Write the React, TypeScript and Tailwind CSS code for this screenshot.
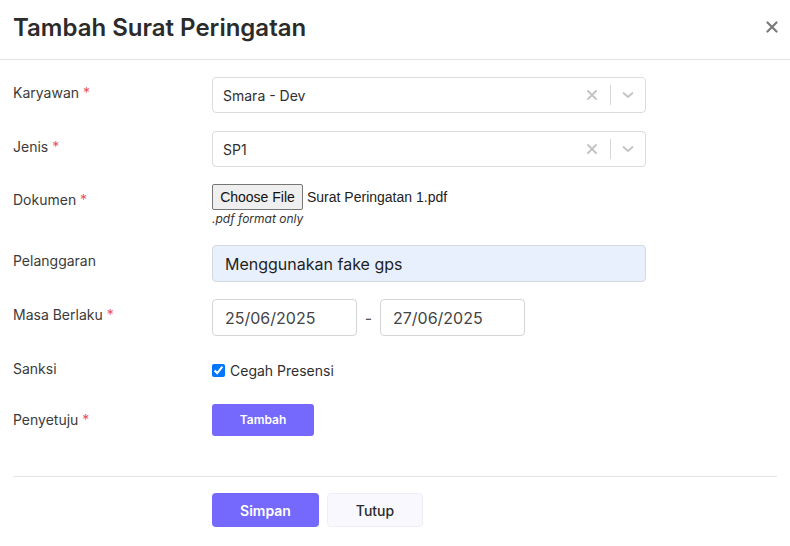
import React from 'react';

const font = { fontFamily: 'Inter, "Noto Sans", sans-serif' };

function Label({ text, required }: { text: string; required?: boolean }) {
  return (
    <div className="w-[199px] shrink-0 pt-[6px] text-[14px] leading-5 text-[#3b3b3b]">
      {text}
      {required && <span className="text-[#ea5455]"> *</span>}
    </div>
  );
}

function SelectBox({ value }: { value: string }) {
  return (
    <div className="flex h-[36px] w-[434px] items-center rounded-[4px] border border-[#dcdcdc] bg-white">
      <div className="flex-1 pl-[10px] text-[14px] text-[#2f2f2f]">{value}</div>
      <svg width="12" height="12" viewBox="0 0 12 12" className="mr-[12px]">
        <path d="M2 2 L10 10 M10 2 L2 10" stroke="#c4c4c4" strokeWidth="2" strokeLinecap="round" />
      </svg>
      <div className="h-[20px] w-px bg-[#d6d6d6]" />
      <svg width="14" height="14" viewBox="0 0 14 14" className="mx-[10px]">
        <path d="M2.5 5 L7 9 L11.5 5" fill="none" stroke="#c4c4c4" strokeWidth="1.8" strokeLinecap="round" strokeLinejoin="round" />
      </svg>
    </div>
  );
}

export default function App() {
  return (
    <div className="h-[546px] w-[790px] bg-white" style={font}>
      {/* header */}
      <div className="flex h-[60px] items-center justify-between border-b border-[#e2e2e2] pl-[13px] pr-[12px]">
        <h2 className="mt-[-4px] text-[24px] font-semibold text-[#2b2b2b]">Tambah Surat Peringatan</h2>
        <svg width="12" height="12" viewBox="0 0 12 12" className="mt-[-6px]">
          <path d="M1.5 1.5 L10.5 10.5 M10.5 1.5 L1.5 10.5" stroke="#7a7a7a" strokeWidth="2.2" strokeLinecap="round" />
        </svg>
      </div>

      <div className="px-[13px]">
        <div className="flex flex-col pt-[17px]">
          <div className="flex h-[36px] items-start">
            <Label text="Karyawan" required />
            <SelectBox value="Smara - Dev" />
          </div>

          <div className="mt-[18px] flex h-[36px] items-start">
            <Label text="Jenis" required />
            <SelectBox value="SP1" />
          </div>

          <div className="mt-[17px] flex h-[44px] items-start">
            <Label text="Dokumen" required />
            <div>
              <div className="flex items-center" style={{ fontFamily: '"Liberation Sans", Arial, sans-serif' }}>
                <span className="flex h-[26px] w-[91px] items-center justify-center rounded-[2px] border border-[#767676] bg-[#efefef] text-[14px] text-[#111]">
                  Choose File
                </span>
                <span className="ml-[4px] text-[14px] text-[#222]">Surat Peringatan 1.pdf</span>
              </div>
              <div className="mt-[1px] text-[12px] italic leading-4 text-[#333]">.pdf format only</div>
            </div>
          </div>

          <div className="mt-[17px] flex h-[37px] items-start">
            <Label text="Pelanggaran" />
            <div className="flex h-[37px] w-[434px] items-center rounded-[4px] border border-[#d4d8e0] bg-[#e8f0fe] pl-[12px] text-[16px] text-[#1f1f1f]">
              Menggunakan fake gps
            </div>
          </div>

          <div className="mt-[17px] flex h-[37px] items-start">
            <Label text="Masa Berlaku" required />
            <div className="flex items-center">
              <div className="flex h-[37px] w-[145px] items-center rounded-[4px] border border-[#d4d4d4] pl-[12px] text-[16px] text-[#444]">
                25/06/2025
              </div>
              <span className="w-[23px] text-center text-[16px] text-[#555]">-</span>
              <div className="flex h-[37px] w-[145px] items-center rounded-[4px] border border-[#d4d4d4] pl-[12px] text-[16px] text-[#444]">
                27/06/2025
              </div>
            </div>
          </div>

          <div className="mt-[17px] flex h-[34px] items-start">
            <Label text="Sanksi" />
            <label className="flex h-[34px] items-center gap-[5px]">
              <input type="checkbox" defaultChecked className="m-0 h-[13px] w-[13px] accent-[#0075ff]" />
              <span className="text-[14px] text-[#2f2f2f]">Cegah Presensi</span>
            </label>
          </div>

          <div className="mt-[17px] flex h-[32px] items-start">
            <Label text="Penyetuju" required />
            <button className="h-[32px] w-[102px] rounded-[3px] bg-[#7468fd] text-[12px] font-semibold text-white">
              Tambah
            </button>
          </div>
        </div>

        <div className="mt-[40px] border-t border-[#e5e5e5]" />

        <div className="flex pl-[199px] pt-[16px]">
          <button className="h-[34px] w-[107px] rounded-[4px] bg-[#7468fd] text-[14px] font-semibold text-white">
            Simpan
          </button>
          <button className="ml-[8px] h-[34px] w-[96px] rounded-[4px] border border-[#eeeef6] bg-[#f8f8fe] text-[14px] font-medium text-[#2b2b2b]">
            Tutup
          </button>
        </div>
      </div>
    </div>
  );
}
